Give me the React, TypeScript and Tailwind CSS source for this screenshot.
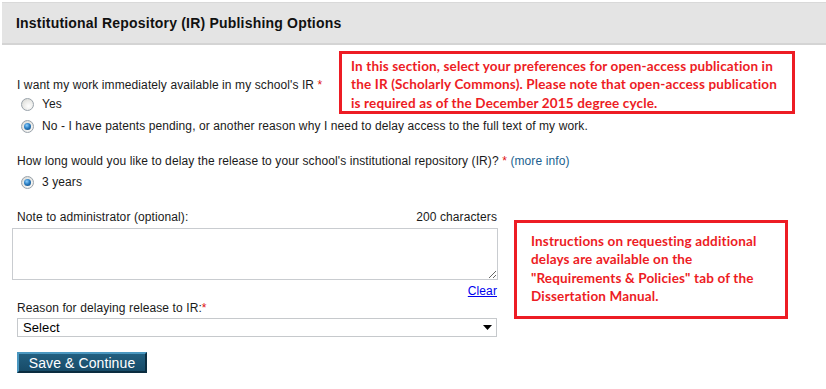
import React from "react";

function Radio({ checked }: { checked?: boolean }) {
  return (
    <span className="flex h-[13px] w-[13px] shrink-0 items-center justify-center rounded-full border border-[#9aa3ab] bg-[radial-gradient(circle_at_60%_65%,#ffffff_0%,#e9e9e6_55%,#cfd0cc_100%)]">
      {checked && (
        <span className="h-[7px] w-[7px] rounded-full bg-[radial-gradient(circle_at_40%_35%,#8fd0ff_0%,#2b7fc4_45%,#0f3d6b_100%)]" />
      )}
    </span>
  );
}

function Option({ label, checked }: { label: string; checked?: boolean }) {
  return (
    <label className="ml-[4px] flex h-[22px] items-center gap-[8px] whitespace-nowrap">
      <Radio checked={checked} />
      <span>{label}</span>
    </label>
  );
}

export default function App() {
  return (
    <div className="relative h-[389px] w-[826px] overflow-hidden bg-white font-['Liberation_Sans',Arial,sans-serif] text-[12px] leading-[16px] tracking-[0.1px] text-[#1a1a1a]">
      <div className="pl-[2px] pt-[2px]">
        <div className="flex h-[43px] items-center border-t border-[#d9d9d9] border-b-2 border-b-[#d4d4d4] bg-[#e4e4e4] pl-[14px]">
          <h1 className="text-[14px] font-bold tracking-[0.2px] text-[#111]">
            Institutional Repository (IR) Publishing Options
          </h1>
        </div>
      </div>

      <form className="w-[497px] pl-[17px]">
        <p className="mt-[32px] whitespace-nowrap">
          I want my work immediately available in my school's IR <span className="text-[#e01010]">*</span>
        </p>
        <Option label="Yes" />
        <Option label="No - I have patents pending, or another reason why I need to delay access to the full text of my work." checked />

        <p className="mt-[16px] whitespace-nowrap">
          How long would you like to delay the release to your school's institutional repository (IR)?{" "}
          <span className="text-[#e01010]">*</span>{" "}
          <a className="text-[#205f8f]">(more info)</a>
        </p>
        <div className="mt-[2px]">
          <Option label="3 years" checked />
        </div>

        <div className="mt-[16px] flex justify-between">
          <span>Note to administrator (optional):</span>
          <span>200 characters</span>
        </div>
        <textarea className="mt-[3px] ml-[-5px] block h-[52px] w-[486px] border border-[#c9ccd0] bg-white" />
        <div className="mt-[3px] flex justify-end">
          <a className="text-[#0000ee] underline">Clear</a>
        </div>

        <p className="mt-[1px]">
          Reason for delaying release to IR:<span className="text-[#e01010]">*</span>
        </p>
        <div className="relative mt-[2px] h-[19px] w-[480px]">
          <select className="h-full w-full appearance-none border border-[#c6c9cc] bg-white pl-[5px] text-[13px] text-black outline-none">
            <option>Select</option>
          </select>
          <svg className="pointer-events-none absolute right-[5px] top-[7px]" width="9" height="5" viewBox="0 0 9 5">
            <path d="M0 0H9L4.5 5Z" fill="#000" />
          </svg>
        </div>

        <button
          type="button"
          className="mt-[15px] h-[21px] w-[130px] border-2 border-t-[#4a97c0] border-l-[#4a97c0] border-r-[#0b2d40] border-b-[#0b2d40] bg-[linear-gradient(#225f80,#174b68)] text-[14px] leading-[16px] text-white"
        >
          Save &amp; Continue
        </button>
      </form>

      <div className="absolute left-[339px] top-[51px] h-[63px] w-[456px] border-[3px] border-[#ed1c24] pl-[9px] pt-[3px] font-['Lato',sans-serif] text-[13.5px] font-bold leading-[18.3px] tracking-[0.15px] whitespace-nowrap text-[#ed1c24]">
        In this section, select your preferences for open-access publication in
        <br />
        the IR (Scholarly Commons). Please note that open-access publication
        <br />
        is required as of the December 2015 degree cycle.
      </div>

      <div className="absolute left-[514px] top-[220px] h-[99px] w-[274px] border-[3px] border-[#ed1c24] pl-[14px] pt-[9px] font-['Lato',sans-serif] text-[13.5px] font-bold leading-[18.3px] tracking-[0.15px] whitespace-nowrap text-[#ed1c24]">
        Instructions on requesting additional
        <br />
        delays are available on the
        <br />
        "Requirements &amp; Policies" tab of the
        <br />
        Dissertation Manual.
      </div>
    </div>
  );
}
